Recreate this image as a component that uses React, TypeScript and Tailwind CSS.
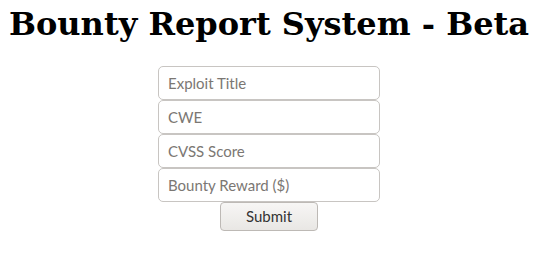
export default function App() {
  const fields = ["Exploit Title", "CWE", "CVSS Score", "Bounty Reward ($)"]

  return (
    <div className="h-[257px] w-[538px] bg-white pt-[6px] text-center">
      <h1 className="font-['DejaVu_Serif',serif] text-[32px] font-bold leading-[37px] text-black">
        Bounty Report System - Beta
      </h1>

      <form className="mt-[23px] flex flex-col items-center">
        {fields.map((label) => (
          <input
            key={label}
            type="text"
            placeholder={label}
            className="h-[34px] w-[222px] rounded-[5px] border border-[#c8c5c2] bg-white px-[9px] pb-px font-['Lato',sans-serif] text-[15px] text-[#333] placeholder:text-[#7b7773] outline-none"
          />
        ))}

        <button
          type="button"
          className="h-[29px] w-[98px] rounded-[4px] border border-[#bdb9b5] bg-linear-to-b from-[#f7f6f5] to-[#e9e7e4] font-['Lato',sans-serif] text-[15px] text-[#333]"
        >
          Submit
        </button>
      </form>
    </div>
  )
}
